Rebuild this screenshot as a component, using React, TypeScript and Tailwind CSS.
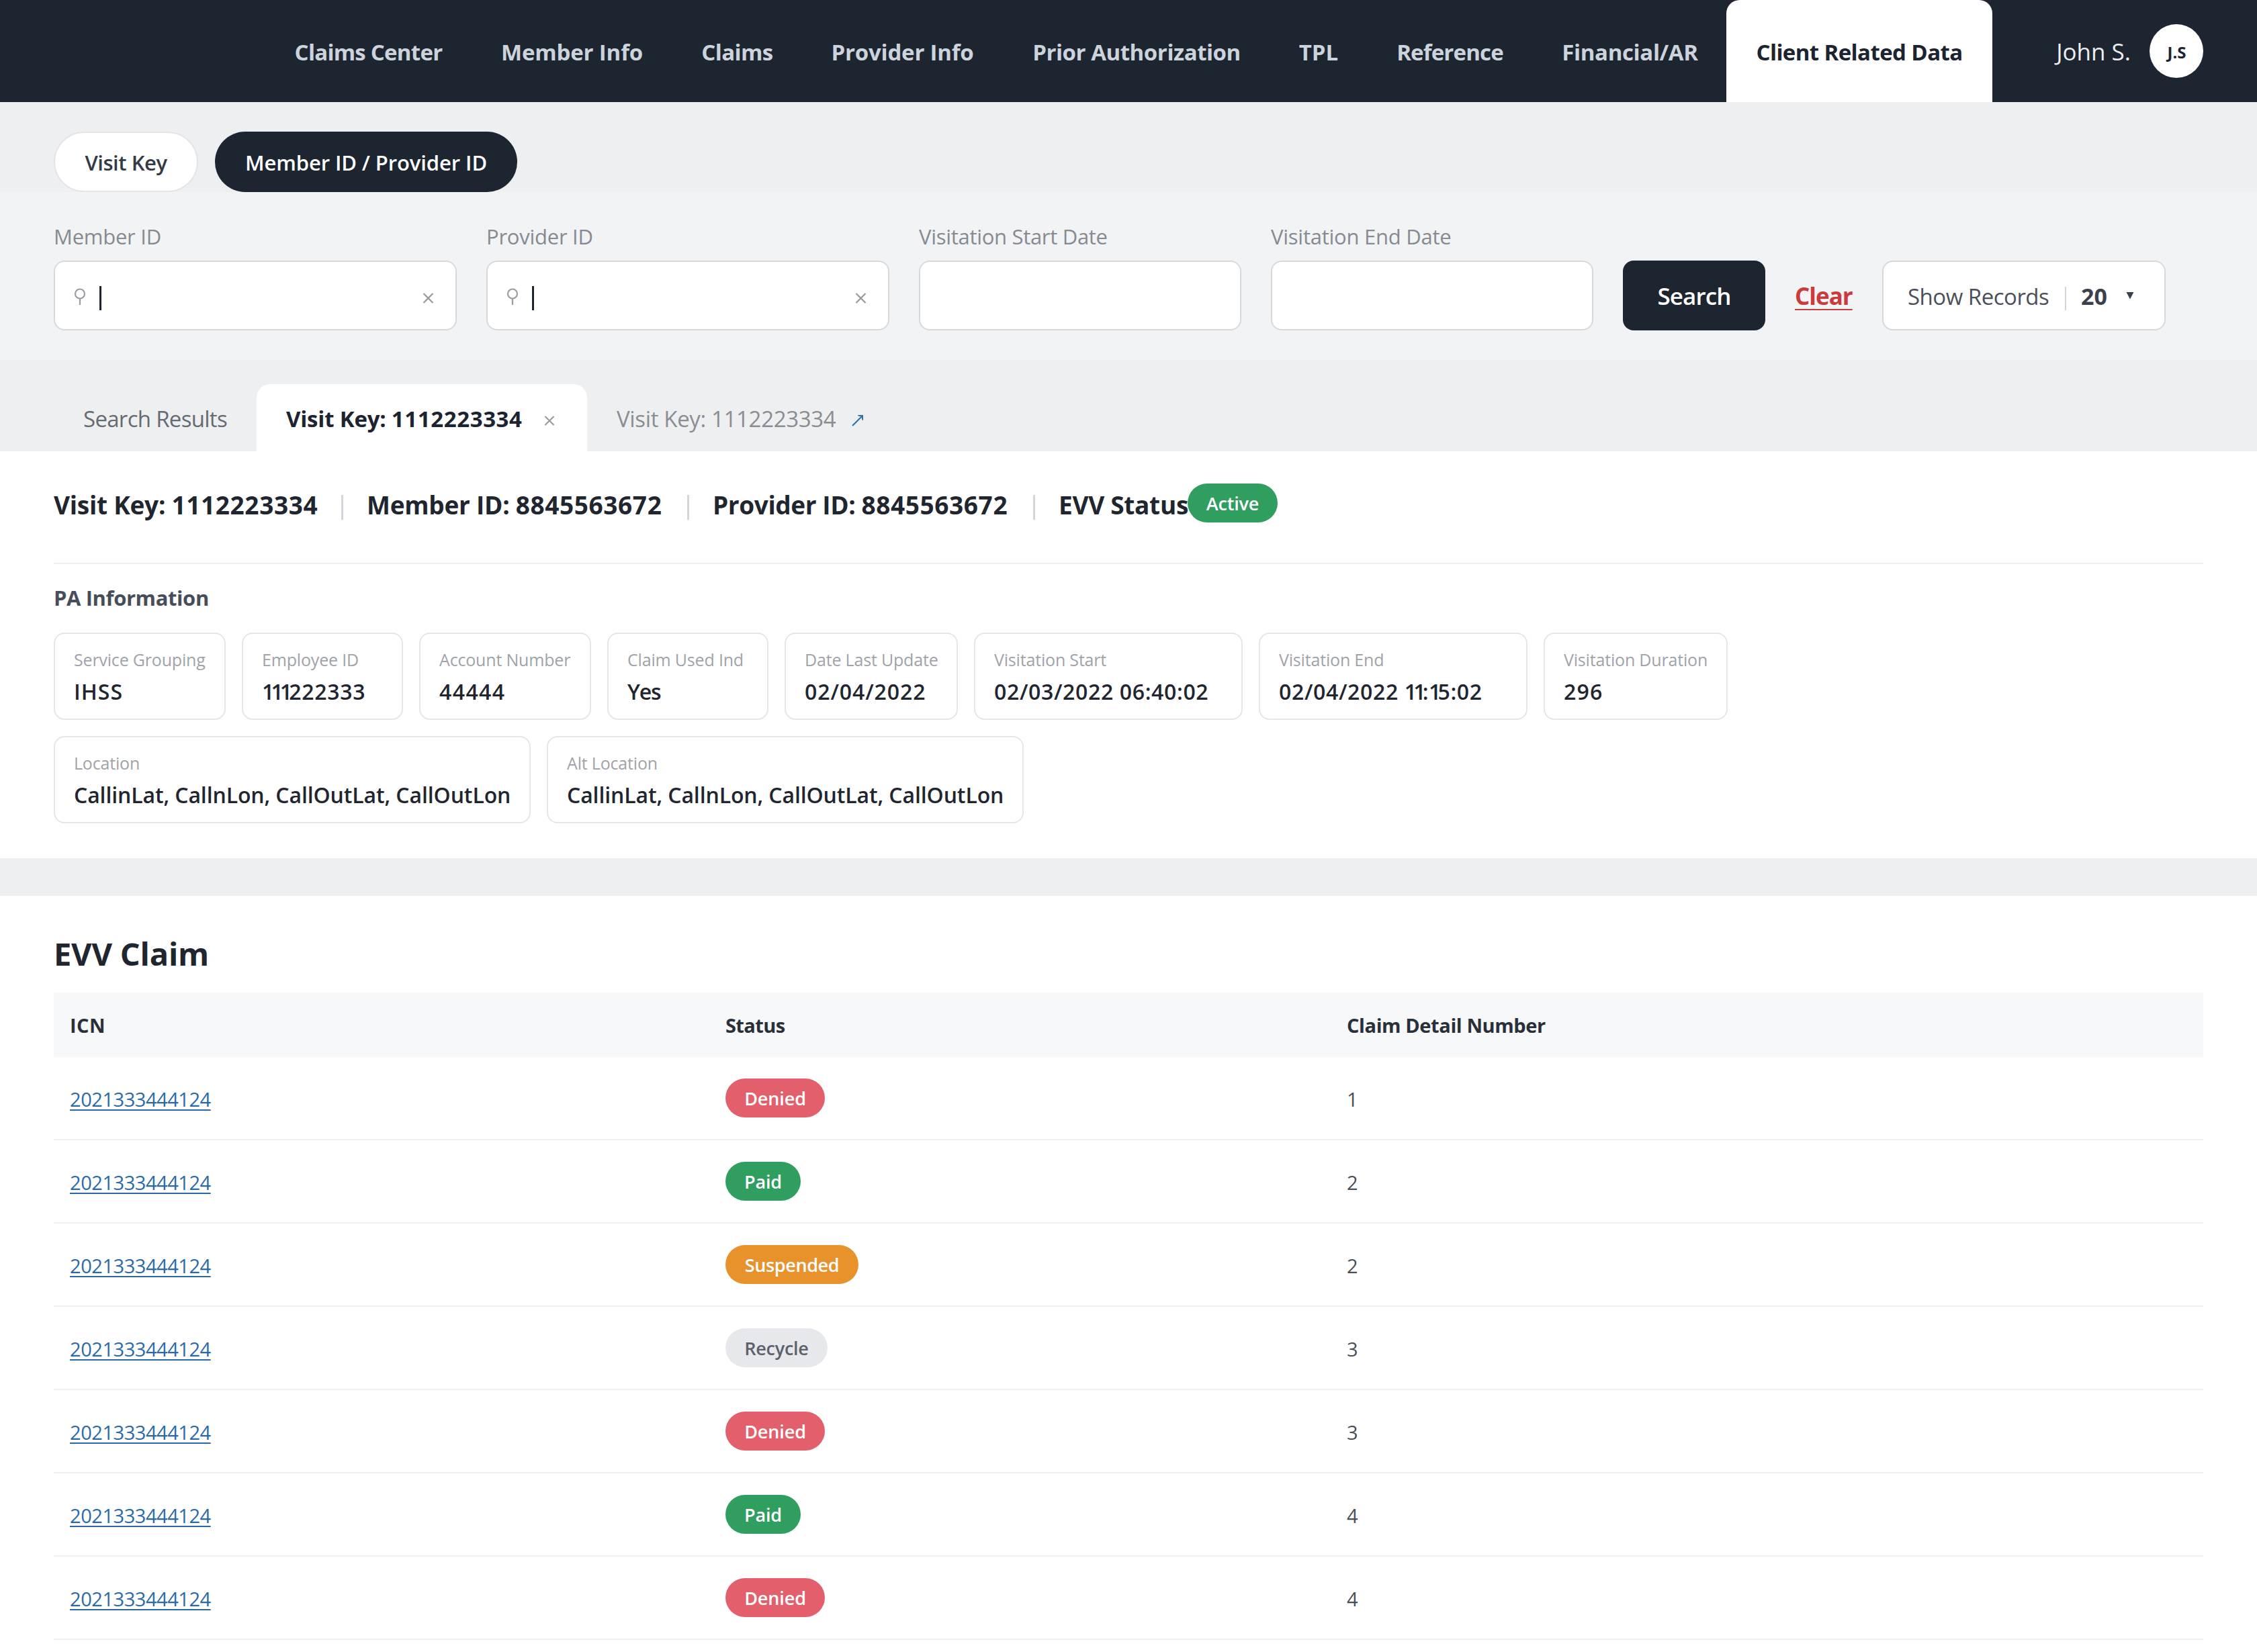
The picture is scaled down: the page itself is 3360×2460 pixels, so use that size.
type NavItem = { label: string; box: string; active?: boolean };

const navItems: NavItem[] = [
  { label: "Claims Center", box: "w-[307px] tracking-[-0.75px]" },
  { label: "Member Info", box: "w-[299px] tracking-[-0.15px]" },
  { label: "Claims", box: "w-[193px] tracking-[-0.6px]" },
  { label: "Provider Info", box: "w-[299px] tracking-[-0.2px]" },
  { label: "Prior Authorization", box: "w-[398px] tracking-[-0.45px]" },
  { label: "TPL", box: "w-[144px]" },
  { label: "Reference", box: "w-[247px] tracking-[-0.84px]" },
  { label: "Financial/AR", box: "w-[289px] tracking-[-0.36px]" },
  { label: "Client Related Data", box: "w-[396px] tracking-[-0.6px]", active: true },
];

type Field = { label: string; value: string; box: string; track: string };

const fieldRows: Field[][] = [
  [
    { label: "Service Grouping", value: "IHSS", box: "w-[256px]", track: "tracking-[1px]" },
    { label: "Employee ID", value: "111222333", box: "w-[240px]", track: "tracking-[0.7px]" },
    { label: "Account Number", value: "44444", box: "w-[256px]", track: "tracking-[1.4px]" },
    { label: "Claim Used Ind", value: "Yes", box: "w-[240px]", track: "tracking-[-1.2px]" },
    { label: "Date Last Update", value: "02/04/2022", box: "w-[258px]", track: "tracking-[0.9px]" },
    { label: "Visitation Start", value: "02/03/2022 06:40:02", box: "w-[400px]", track: "tracking-[0.65px]" },
    { label: "Visitation End", value: "02/04/2022 11:15:02", box: "w-[400px]", track: "tracking-[0.65px]" },
    { label: "Visitation Duration", value: "296", box: "w-[274px]", track: "tracking-[1.2px]" },
  ],
  [
    { label: "Location", value: "CallinLat, CallnLon, CallOutLat, CallOutLon", box: "w-[710px]", track: "tracking-[-0.12px]" },
    { label: "Alt Location", value: "CallinLat, CallnLon, CallOutLat, CallOutLon", box: "w-[710px]", track: "tracking-[-0.12px]" },
  ],
];

type Status = "Denied" | "Paid" | "Suspended" | "Recycle" | "Active";

const statusStyle: Record<Status, string> = {
  Denied: "w-[148px] bg-[#e25f6b] text-white tracking-[-0.12px]",
  Paid: "w-[112px] bg-[#2f9e5e] text-white tracking-[-0.2px]",
  Suspended: "w-[198px] bg-[#e8922c] text-white tracking-[-0.38px]",
  Recycle: "w-[152px] bg-[#e7e8ec] text-[#5b616b] tracking-[-0.27px]",
  Active: "w-[134px] bg-[#2f9e5e] text-white tracking-[-0.18px]",
};

const claims: { status: Status; detail: string }[] = [
  { status: "Denied", detail: "1" },
  { status: "Paid", detail: "2" },
  { status: "Suspended", detail: "2" },
  { status: "Recycle", detail: "3" },
  { status: "Denied", detail: "3" },
  { status: "Paid", detail: "4" },
  { status: "Denied", detail: "4" },
];

function Badge({ status }: { status: Status }) {
  return (
    <span className={`flex h-[58px] items-center justify-center rounded-full pt-[2px] text-[27px] font-semibold ${statusStyle[status]}`}>
      {status}
    </span>
  );
}

function Cross({ className }: { className: string }) {
  return (
    <svg viewBox="0 0 16 16" className={className} fill="none" stroke="currentColor" strokeWidth="2.2">
      <path d="M1 1 15 15M15 1 1 15" />
    </svg>
  );
}

// Sets the digit 1 tighter than the other figures.
function Figures({ text }: { text: string }) {
  return (
    <>
      {text.split(/(1)/).map((part, i) =>
        part === "1" ? (
          <span key={i} className="tracking-[-4.9px]">1</span>
        ) : (
          part
        )
      )}
    </>
  );
}

function SearchField({ label, track }: { label: string; track: string }) {
  return (
    <div className="w-[600px]">
      <div className={`mb-3 text-[31px] leading-[48px] text-[#868a92] ${track}`}>{label}</div>
      <div className="flex h-[104px] items-center rounded-[16px] border-2 border-[#d6d9dc] bg-white pr-[32px] pl-[28px]">
        <svg viewBox="0 0 18 26" className="mt-[4px] h-[26px] w-[18px] text-[#9a9da3]" fill="none" stroke="currentColor" strokeWidth="2.2">
          <circle cx="9" cy="8.5" r="7" />
          <path d="M9 15.5V25" />
        </svg>
        <span className="mt-[8px] ml-[20px] h-[36px] w-[3px] bg-[#1b2430]" />
        <Cross className="mt-[7px] ml-auto h-[16px] w-[17px] text-[#96999e]" />
      </div>
    </div>
  );
}

function DateField({ label, track }: { label: string; track: string }) {
  return (
    <div className="w-[480px]">
      <div className={`mb-3 text-[31px] leading-[48px] text-[#868a92] ${track}`}>{label}</div>
      <div className="h-[104px] rounded-[16px] border-2 border-[#d6d9dc] bg-white" />
    </div>
  );
}

function Divider() {
  return <span className="mt-[9px] mr-[35px] h-[37px] w-[3px] bg-[#d2d5d9]" />;
}

export default function App() {
  return (
    <div className="h-[2460px] w-[3360px] overflow-hidden bg-white font-['Open_Sans',sans-serif] whitespace-nowrap text-[#1f2630]">
      <header className="flex h-[152px] bg-[#1c2530] pl-[395px]">
        <nav className="flex">
          {navItems.map((item) => (
            <a
              key={item.label}
              className={`flex items-center justify-center pt-[4px] text-[33px] font-bold ${item.box} ${
                item.active ? "-ml-[1px] rounded-t-[20px] bg-white text-[#1b2430]" : "text-[#cdd3dd]"
              }`}
            >
              {item.label}
            </a>
          ))}
        </nav>
        <div className="ml-auto flex items-center pr-[80px]">
          <span className="mr-[28px] pt-[2px] text-[35px] text-[#eceef2]">John S.</span>
          <span className="flex size-[80px] items-center justify-center rounded-full bg-white pt-[4px] pl-[1px] text-[24px] font-bold text-[#1b2430]">J.S</span>
        </div>
      </header>

      <div className="flex h-[134px] gap-[25px] bg-[#edeff1] pt-[44px] pl-[80px] text-[31px] font-semibold">
        <button className="flex h-[90px] w-[215px] items-center justify-center rounded-full border-2 border-[#e2e4e7] bg-white pt-[3px] tracking-[-0.46px] text-[#343b46]">
          Visit Key
        </button>
        <button className="flex h-[90px] w-[450px] items-center justify-center rounded-full bg-[#1c2530] pt-[3px] tracking-[-0.1px] text-white">
          Member ID / Provider ID
        </button>
      </div>

      <div className="flex h-[250px] gap-[44px] bg-[#f1f3f5] pt-[42px] pl-[80px]">
        <SearchField label="Member ID" track="tracking-[-0.25px]" />
        <SearchField label="Provider ID" track="tracking-[-0.25px]" />
        <DateField label="Visitation Start Date" track="tracking-[-0.3px]" />
        <DateField label="Visitation End Date" track="tracking-[-0.25px]" />
        <div className="box-content flex h-[104px] items-center pt-[60px]">
          <button className="flex h-[104px] w-[212px] items-center justify-center rounded-[16px] bg-[#1c2530] pt-[3px] text-[35px] font-semibold tracking-[-0.9px] text-white">
            Search
          </button>
          <a className="mt-[3px] ml-[44px] w-[86px] text-[35px] font-bold tracking-[-1px] text-[#cb3a3c] underline decoration-2 underline-offset-[6px]">
            Clear
          </a>
          <div className="ml-[44px] flex h-[104px] w-[422px] items-center rounded-[16px] border-2 border-[#d6d9dc] bg-white pl-[36px] text-[33px] text-[#4a505a]">
            <span className="mt-[3px] w-[234px] tracking-[-0.5px]">Show Records</span>
            <span className="mt-[9px] h-[35px] w-[2px] bg-[#d2d5d9]" />
            <span className="mt-[3px] ml-[22px] w-[67px] text-[34px] font-bold text-[#3a414c]">20</span>
            <svg viewBox="0 0 12 11" className="h-[11px] w-[12px]" fill="#3a414c">
              <path d="M0.5 0H11.5L6 10.5Z" />
            </svg>
          </div>
        </div>
      </div>

      <div className="flex h-[136px] items-end bg-[#eeeff1] pl-[80px] text-[33px]">
        <div className="flex h-[100px] w-[302px] items-center pt-[4px] pl-[44px] tracking-[-0.7px] text-[#666a71]">Search Results</div>
        <div className="flex h-[100px] w-[492px] items-center rounded-t-[20px] bg-white pt-[4px] pl-[44px] text-[33px] font-bold text-[#1b2430]">
          <span className="w-[384px] tracking-[-0.2px]">Visit Key: <span className="tracking-[0.6px]">1112223334</span></span>
          <Cross className="mt-[5px] h-[15px] w-[16px] text-[#96999e]" />
        </div>
        <div className="flex h-[100px] items-center pt-[4px] pl-[44px] tracking-[-0.35px] text-[#8a8d93]">
          Visit Key: 1112223334
          <svg viewBox="0 0 18 18" className="mt-[3px] ml-[24px] size-[18px] text-[#2f6fb0]" fill="none" stroke="currentColor" strokeWidth="2.2">
            <path d="M1 17 15.500 2.500" />
            <path d="M8.500 1H17V9.500L15 7.500V3H10.500Z" fill="currentColor" stroke="none" />
          </svg>
        </div>
      </div>

      <section className="px-[80px] pb-[52px]">
        <div className="flex h-[168px] border-b-2 border-[#eeeff1] pt-[48px] text-[37px] font-bold">
          <div className="flex h-[62px] items-center">
            <span className="w-[428px] pt-[2px] tracking-[-0.25px]">Visit Key: <span className="tracking-[0.6px]">1112223334</span></span>
            <Divider />
            <span className="w-[477px] pt-[2px] tracking-[-0.25px]">Member ID: <span className="tracking-[0.6px]">8845563672</span></span>
            <Divider />
            <span className="w-[477px] pt-[2px] tracking-[-0.4px]">Provider ID: <span className="tracking-[0.6px]">8845563672</span></span>
            <Divider />
            <span className="w-[192px] pt-[2px] tracking-[-0.3px]">EVV Status</span>
            <span className="self-start"><Badge status="Active" /></span>
          </div>
        </div>
        <h3 className="mt-[28px] mb-[30px] text-[31px] leading-[44px] font-bold tracking-[-0.4px] text-[#474e5a]">PA Information</h3>
        <div className="flex flex-col gap-[24px]">
          {fieldRows.map((row, i) => (
            <div key={i} className="flex gap-[24px]">
              {row.map((f) => (
                <div key={f.label} className={`h-[130px] rounded-[16px] border-2 border-[#e5e6e9] pt-[21px] pl-[28px] ${f.box}`}>
                  <div className="mb-[9px] text-[25px] leading-[34px] tracking-[-0.18px] text-[#a0a3a8]">{f.label}</div>
                  <div className={`text-[32px] leading-[44px] font-semibold ${f.track}`}>
                    <Figures text={f.value} />
                  </div>
                </div>
              ))}
            </div>
          ))}
        </div>
      </section>

      <div className="h-[56px] bg-[#eeeff1]" />

      <section className="px-[80px] pt-[54px]">
        <h2 className="mb-[26px] text-[47px] leading-[64px] font-bold tracking-[-0.2px]">EVV Claim</h2>
        <div className="grid h-[96px] grid-cols-[976px_925px_1fr] items-center bg-[#f7f8fa] pt-[2px] pl-[24px] text-[29px] font-bold text-[#2a303a]">
          <span className="tracking-[0.4px]">ICN</span>
          <span className="tracking-[-0.6px]">Status</span>
          <span className="tracking-[-0.4px]">Claim Detail Number</span>
        </div>
        {claims.map((c, i) => (
          <div key={i} className="grid h-[124px] grid-cols-[976px_925px_1fr] items-center border-b-2 border-[#eff0f1] pl-[24px] text-[29px]">
            <span className="pt-[3px]">
              <a className="tracking-[-0.45px] text-[#2b6aa8] underline decoration-2 underline-offset-[4px]">2021333444124</a>
            </span>
            <span className="flex"><Badge status={c.status} /></span>
            <span className="pt-[3px] text-[#4a4e56]">{c.detail}</span>
          </div>
        ))}
      </section>
    </div>
  );
}
